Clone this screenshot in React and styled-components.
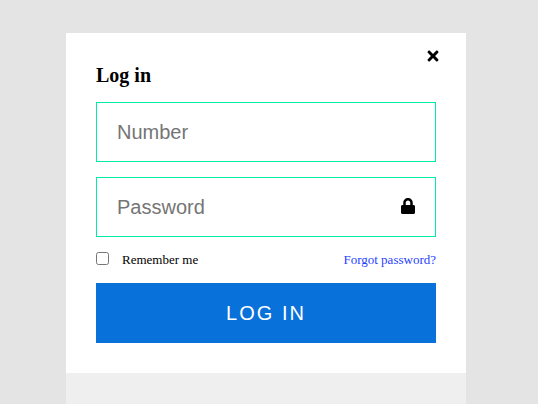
import React from "react";
import styled, { createGlobalStyle } from "styled-components";
import { FaLock, FaTimes } from "react-icons/fa";

const GlobalStyle = createGlobalStyle`
  *, *::before, *::after { box-sizing: border-box; }
  body {
    margin: 0;
    background: #e4e4e4;
    color: #000;
    font-family: "Liberation Serif", "Times New Roman", serif;
  }
`;

const Page = styled.main`
  display: flex;
  justify-content: center;
  min-height: 100vh;
  padding: 33px 6px 0 0;
`;

const Dialog = styled.section`
  display: flex;
  flex-direction: column;
  width: 100%;
  max-width: 400px;
  background: #efefef;
`;

const Form = styled.form`
  position: relative;
  padding: 30px;
  background: #fff;
`;

const CloseButton = styled.button`
  position: absolute;
  top: 15px;
  right: 25px;
  display: flex;
  padding: 0;
  border: 0;
  background: none;
  color: #000;
  font-size: 16px;
  cursor: pointer;
`;

const Title = styled.h1`
  margin: 0 0 15px;
  font-size: 20px;
  line-height: 24px;
  font-weight: 700;
`;

const Field = styled.div`
  position: relative;
  margin-bottom: ${({ $last }) => ($last ? "0" : "15px")};
`;

const TextInput = styled.input`
  display: block;
  width: 100%;
  height: 60px;
  padding: 0 ${({ $withIcon }) => ($withIcon ? "50px" : "20px")} 0 20px;
  border: 1px solid #00eba8;
  border-radius: 0;
  background: #fff;
  font-family: "Liberation Sans", Arial, sans-serif;
  font-size: 20px;
  outline: none;

  &::placeholder { color: #757575; }
`;

const FieldIcon = styled.span`
  position: absolute;
  top: 0;
  bottom: 0;
  right: 20px;
  display: flex;
  align-items: center;
  padding-bottom: 2px;
  font-size: 16px;
  pointer-events: none;
`;

const Options = styled.div`
  display: flex;
  align-items: center;
  justify-content: space-between;
  height: 46px;
  padding-bottom: 2px;
  font-size: 13px;
  line-height: 15px;
`;

const Remember = styled.label`
  display: flex;
  align-items: center;
  gap: 13px;
`;

const Checkbox = styled.input`
  width: 13px;
  height: 13px;
  margin: 0 0 1px;
`;

const ForgotLink = styled.a`
  color: #1f3fff;
  text-decoration: none;
`;

const SubmitButton = styled.button`
  display: block;
  width: 100%;
  height: 60px;
  padding: 0;
  border: 0;
  background: #0971da;
  color: #fff;
  font-family: "Liberation Sans", Arial, sans-serif;
  font-size: 20px;
  letter-spacing: 2px;
  text-transform: uppercase;
  cursor: pointer;
`;

export default function App() {
  return (
    <>
      <GlobalStyle />
      <Page>
        <Dialog aria-labelledby="login-title">
          <Form onSubmit={(event) => event.preventDefault()}>
            <CloseButton type="button" aria-label="Close">
              <FaTimes />
            </CloseButton>
            <Title id="login-title">Log in</Title>
            <Field>
              <TextInput type="text" placeholder="Number" aria-label="Number" />
            </Field>
            <Field $last>
              <TextInput type="password" placeholder="Password" aria-label="Password" $withIcon />
              <FieldIcon>
                <FaLock aria-hidden="true" />
              </FieldIcon>
            </Field>
            <Options>
              <Remember htmlFor="remember">
                <Checkbox id="remember" type="checkbox" />
                Remember me
              </Remember>
              <ForgotLink href="#forgot">Forgot password?</ForgotLink>
            </Options>
            <SubmitButton type="submit">Log in</SubmitButton>
          </Form>
        </Dialog>
      </Page>
    </>
  );
}
